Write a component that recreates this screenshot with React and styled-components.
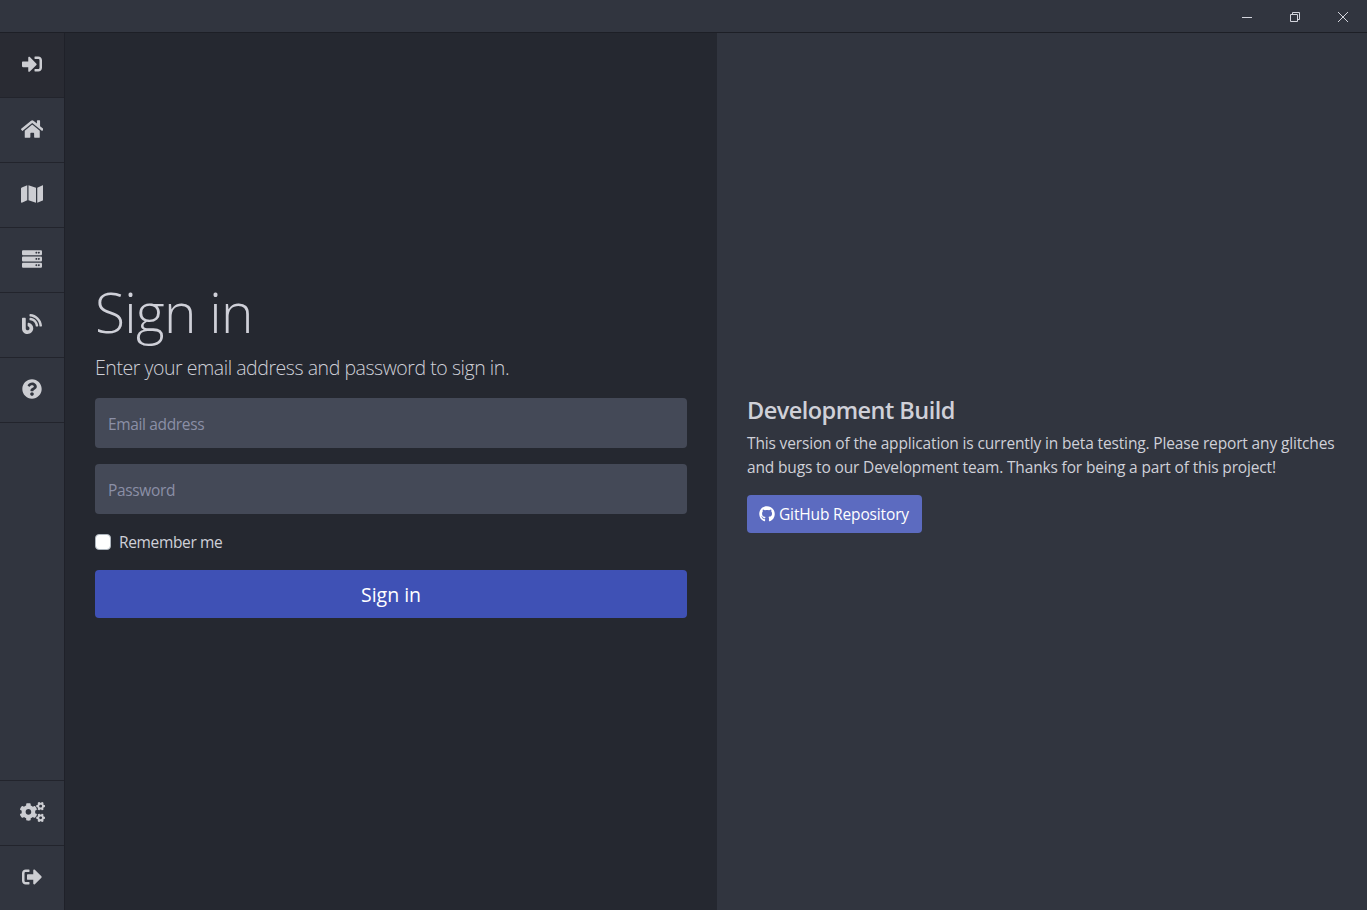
import React from "react";
import styled, { createGlobalStyle } from "styled-components";
import {
  FaSignInAlt,
  FaHome,
  FaMap,
  FaServer,
  FaBlog,
  FaQuestionCircle,
  FaCogs,
  FaSignOutAlt,
  FaGithub,
} from "react-icons/fa";

const GlobalStyle = createGlobalStyle`
  *, *::before, *::after { box-sizing: border-box; }
  body {
    margin: 0;
    background: #252830;
    color: #cfd0d8;
    font-family: "Segoe UI", "Open Sans", "Noto Sans", sans-serif;
    font-size: 15.5px;
    line-height: 1.5;
    overflow: hidden;
  }
  h1, h4, p { margin: 0; }
`;

const Window = styled.div`
  display: flex;
  flex-direction: column;
  height: 100vh;
`;

const TitleBar = styled.header`
  display: flex;
  justify-content: flex-end;
  flex: 0 0 33px;
  background: #31353f;
  border-bottom: 1px solid #1d1f26;
`;

const WindowButton = styled.button`
  display: flex;
  align-items: center;
  justify-content: center;
  width: 48px;
  padding: 2px 0 0;
  border: 0;
  background: none;
  color: #d3d5dd;
`;

const Body = styled.div`
  display: flex;
  flex: 1;
  min-height: 0;
`;

const Sidebar = styled.nav`
  display: flex;
  flex-direction: column;
  justify-content: space-between;
  flex: 0 0 65px;
  background: #31353f;
  border-right: 1px solid #1f2129;
`;

const NavGroup = styled.div`
  display: flex;
  flex-direction: column;
`;

const NavItem = styled.a`
  display: flex;
  align-items: center;
  justify-content: center;
  height: 65px;
  padding-bottom: ${(p) => (p.$bottom ? "3px" : "2px")};
  color: #cccdd2;
  background: ${(p) => (p.$active ? "#292b33" : "transparent")};
  border-bottom: ${(p) => (p.$bottom ? "0" : "1px solid #22242c")};
  border-top: ${(p) => (p.$bottom ? "1px solid #22242c" : "0")};

  svg {
    width: ${(p) => p.$iconWidth || 20}px;
    height: 20px;
  }
`;

const SignInPanel = styled.main`
  display: flex;
  flex-direction: column;
  justify-content: center;
  flex: 0 0 652px;
  padding: 0 30px 48px;
  background: #252830;
`;

const InfoPanel = styled.aside`
  display: flex;
  flex-direction: column;
  justify-content: center;
  align-items: flex-start;
  flex: 1;
  padding: 0 29px 16px 30px;
  background: #31353f;
`;

const Title = styled.h1`
  margin-bottom: 8px;
  padding-top: 3px;
  font-size: 55px;
  font-weight: 300;
  line-height: 64px;
  letter-spacing: -0.7px;
`;

const Lead = styled.p`
  margin-bottom: 16px;
  padding-top: 2px;
  font-size: 19.5px;
  font-weight: 300;
  line-height: 28px;
  white-space: nowrap;
  letter-spacing: -0.45px;
`;

const Field = styled.input`
  height: 50px;
  margin-bottom: 16px;
  padding: 1px 13px 0;
  border: 0;
  border-radius: 4px;
  background: #444957;
  color: #cfd0d8;
  font: inherit;
  letter-spacing: -0.35px;

  &::placeholder {
    color: #8b8fa6;
    opacity: 1;
  }
`;

const Remember = styled.label`
  display: flex;
  align-items: center;
  gap: 8px;
  height: 24px;
  margin-bottom: 16px;
  letter-spacing: -0.35px;

  span {
    padding-top: 2px;
  }
`;

const Checkbox = styled.input`
  appearance: none;
  width: 16px;
  height: 16px;
  margin: 0;
  border: 1px solid #adb5bd;
  border-radius: 4px;
  background: #fff;
`;

const SubmitButton = styled.button`
  height: 48px;
  padding: 2px 0 0;
  border: 0;
  border-radius: 4px;
  background: #3f51b5;
  color: #fff;
  font: inherit;
  font-size: 19.5px;
`;

const InfoTitle = styled.h4`
  margin-bottom: 8px;
  padding-top: 4px;
  font-size: 23.5px;
  font-weight: 600;
  line-height: 25px;
  letter-spacing: -0.53px;
`;

const InfoText = styled.p`
  margin-bottom: 16px;
  line-height: 24px;
  letter-spacing: -0.15px;
`;

const InfoLine = styled.span`
  display: block;
  white-space: nowrap;
`;

const RepoButton = styled.a`
  display: flex;
  align-items: center;
  gap: 4px;
  width: 175px;
  height: 38px;
  padding: 0 12px;
  border-radius: 4px;
  background: #5c6bc0;
  color: #fff;
  letter-spacing: -0.15px;
  white-space: nowrap;

  svg {
    flex: none;
    width: 16px;
    height: 16px;
  }

  span {
    padding-top: 2px;
  }
`;

const mainNav = [
  { label: "Sign in", Icon: FaSignInAlt, active: true },
  { label: "Home", Icon: FaHome, width: 22.5 },
  { label: "Map", Icon: FaMap, width: 22.5 },
  { label: "Servers", Icon: FaServer },
  { label: "Blog", Icon: FaBlog },
  { label: "Help", Icon: FaQuestionCircle },
];

const footerNav = [
  { label: "Settings", Icon: FaCogs, width: 25 },
  { label: "Sign out", Icon: FaSignOutAlt },
];

function WindowIcon({ children }) {
  return (
    <svg width="10" height="10" viewBox="0 0 10 10" fill="none" stroke="currentColor">
      {children}
    </svg>
  );
}

export default function App() {
  return (
    <Window>
      <GlobalStyle />
      <TitleBar>
        <WindowButton aria-label="Minimize">
          <WindowIcon>
            <path d="M0 5.5h10" />
          </WindowIcon>
        </WindowButton>
        <WindowButton aria-label="Restore">
          <WindowIcon>
            <path d="M.5 2.5h7v7h-7zM2.5 2.5v-2h7v7h-2" />
          </WindowIcon>
        </WindowButton>
        <WindowButton aria-label="Close">
          <WindowIcon>
            <path d="M0 0l10 10M10 0L0 10" />
          </WindowIcon>
        </WindowButton>
      </TitleBar>
      <Body>
        <Sidebar>
          <NavGroup>
            {mainNav.map(({ label, Icon, width, active }) => (
              <NavItem key={label} aria-label={label} $active={active} $iconWidth={width}>
                <Icon />
              </NavItem>
            ))}
          </NavGroup>
          <NavGroup>
            {footerNav.map(({ label, Icon, width }) => (
              <NavItem key={label} aria-label={label} $bottom $iconWidth={width}>
                <Icon />
              </NavItem>
            ))}
          </NavGroup>
        </Sidebar>
        <SignInPanel>
          <Title>Sign in</Title>
          <Lead>Enter your email address and password to sign in.</Lead>
          <Field type="email" placeholder="Email address" />
          <Field type="password" placeholder="Password" />
          <Remember>
            <Checkbox type="checkbox" />
            <span>Remember me</span>
          </Remember>
          <SubmitButton>Sign in</SubmitButton>
        </SignInPanel>
        <InfoPanel>
          <InfoTitle>Development Build</InfoTitle>
          <InfoText>
            <InfoLine>
              This version of the application is currently in beta testing. Please report any glitches
            </InfoLine>
            <InfoLine>
              and bugs to our Development team. Thanks for being a part of this project!
            </InfoLine>
          </InfoText>
          <RepoButton>
            <FaGithub />
            <span>GitHub Repository</span>
          </RepoButton>
        </InfoPanel>
      </Body>
    </Window>
  );
}
